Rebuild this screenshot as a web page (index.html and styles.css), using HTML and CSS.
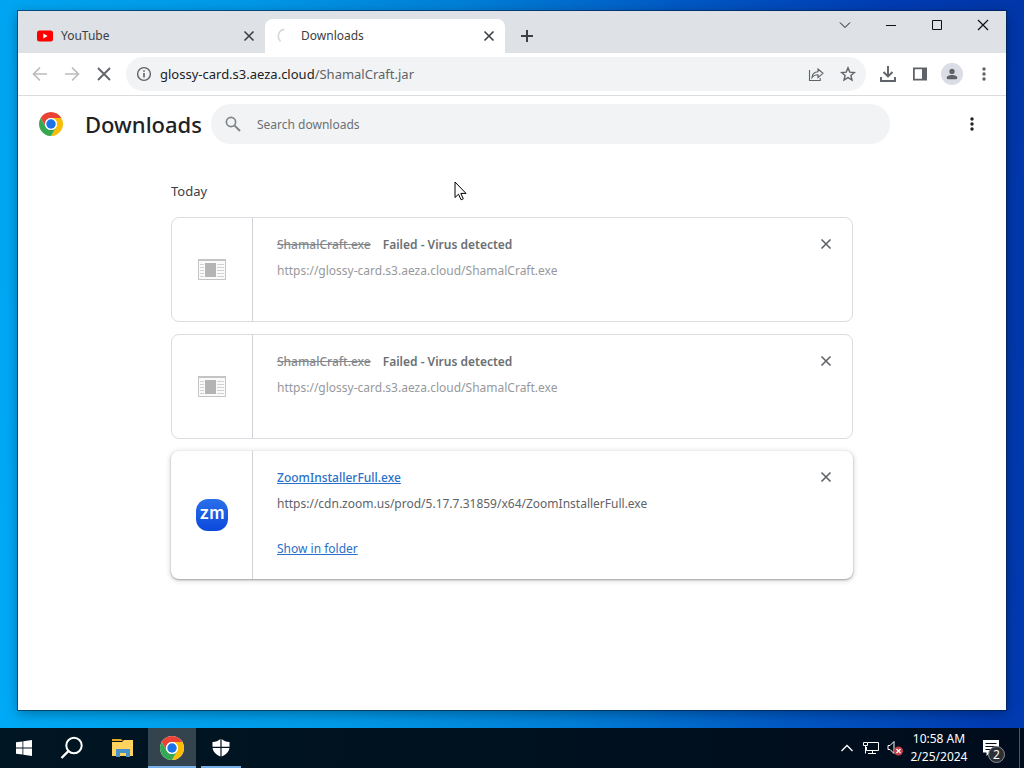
FILE: index.html
```html
<!DOCTYPE html>
<html lang="en">
<head>
    <meta charset="UTF-8">
    <meta name="viewport" content="width=device-width, initial-scale=1.0">
    <title>Downloads</title>
    <link rel="stylesheet" href="styles.css">
</head>
<body>
    <svg class="defs" aria-hidden="true">
        <symbol id="chrome" viewBox="0 0 24 24">
            <circle cx="12" cy="12" r="12" fill="#fff"/>
            <path fill="#ea4335" d="M1.61 6A12 12 0 0 1 22.39 6H12A6 6 0 0 0 6.8 15z"/>
            <path fill="#fbbc04" d="M22.39 6A12 12 0 0 1 12 24L17.2 15A6 6 0 0 0 12 6z"/>
            <path fill="#34a853" d="M12 24A12 12 0 0 1 1.61 6L6.8 15A6 6 0 0 0 17.2 15z"/>
            <circle cx="12" cy="12" r="6" fill="#fff"/>
            <circle cx="12" cy="12" r="4.7" fill="#1a73e8"/>
        </symbol>
        <symbol id="close" viewBox="0 0 16 16">
            <path d="M3.5 3.5l9 9M12.5 3.5l-9 9" fill="none" stroke="currentColor" stroke-width="1.6"/>
        </symbol>
        <symbol id="dots" viewBox="0 0 16 16">
            <circle cx="8" cy="3" r="1.7"/><circle cx="8" cy="8" r="1.7"/><circle cx="8" cy="13" r="1.7"/>
        </symbol>
        <symbol id="exe" viewBox="0 0 28 22">
            <path fill="#fafafa" stroke="#c4c4c4" d="M.5.5h27v20H.5z"/>
            <path fill="#c4c4c4" d="M0 0h28v2H0z"/>
            <path stroke="#d2d2d2" d="M2 5.5h4M2 8.500h4M2 11.5h4M2 14.5h4M2 17.5h4M19 5.5h7M19 8.5h7M19 11.5h7M19 14.5h7M19 17.5h7"/>
            <path fill="#b4b4b4" d="M7 4h11v14H7z"/>
        </symbol>
    </svg>

    <main class="desktop">
        <div class="window">
            <div class="tab-strip">
                <div class="tab">
                    <svg class="icon" viewBox="0 0 16 16"><rect y="2.5" width="16" height="11" rx="2.5" fill="#f00"/><path fill="#fff" d="M6.3 5.5v5l4.3-2.5z"/></svg>
                    <span>YouTube</span>
                    <button aria-label="Close tab"><svg class="icon" viewBox="0 0 16 16"><use href="#close"/></svg></button>
                </div>
                <div class="tab active">
                    <svg class="icon" viewBox="0 0 16 16"><path d="M3.5 13.3A7 7 0 0 1 7.5 1.3" fill="none" stroke="#d4d6da" stroke-width="1.6"/></svg>
                    <span>Downloads</span>
                    <button aria-label="Close tab"><svg class="icon" viewBox="0 0 16 16"><use href="#close"/></svg></button>
                </div>
                <button class="new-tab" aria-label="New tab"><svg class="icon" viewBox="0 0 16 16"><path d="M8 2v12M2 8h12" stroke="currentColor" stroke-width="2"/></svg></button>
                <div class="window-controls">
                    <button aria-label="Search tabs"><svg class="icon" viewBox="0 0 16 16"><path d="M3 5.5l5 5 5-5" fill="none" stroke="currentColor"/></svg></button>
                    <button aria-label="Minimize"><svg class="icon" viewBox="0 0 16 16"><path d="M3 8.5h10" stroke="currentColor"/></svg></button>
                    <button aria-label="Maximize"><svg class="icon" viewBox="0 0 16 16"><path d="M3.5 3.5h9v9h-9z" fill="none" stroke="currentColor"/></svg></button>
                    <button aria-label="Close"><svg class="icon" viewBox="0 0 16 16"><path d="M3 3l10 10M13 3L3 13" stroke="currentColor" stroke-width="1.2"/></svg></button>
                </div>
            </div>

            <div class="toolbar">
                <button class="dim" aria-label="Back"><svg class="icon" viewBox="0 0 16 16"><path d="M15 8H2M8 1.5L1.5 8 8 14.5" fill="none" stroke="currentColor" stroke-width="1.7"/></svg></button>
                <button class="dim" aria-label="Forward"><svg class="icon" viewBox="0 0 16 16"><path d="M1 8h13M8 1.5L14.5 8 8 14.5" fill="none" stroke="currentColor" stroke-width="1.7"/></svg></button>
                <button aria-label="Stop"><svg class="icon" viewBox="0 0 16 16"><path d="M2 2l12 12M14 2L2 14" stroke="currentColor" stroke-width="1.8"/></svg></button>
                <div class="address">
                    <svg class="icon" viewBox="0 0 16 16"><circle cx="8" cy="8" r="6.4" fill="none" stroke="currentColor" stroke-width="1.4"/><path d="M8 7v4.5M8 4.2v1.6" stroke="currentColor" stroke-width="1.6"/></svg>
                    <p class="url">glossy-card.s3.aeza.cloud<span>/ShamalCraft.jar</span></p>
                    <button aria-label="Share"><svg class="icon" viewBox="0 0 16 16"><path d="M1.5 4v10.5h10.7V12M4 11.5c.4-4 2.5-5.7 6-5.8V3l5 4.3-5 4.2V8.8c-2.5 0-4.5.7-6 2.7z" fill="none" stroke="currentColor" stroke-width="1.1"/></svg></button>
                    <button aria-label="Bookmark"><svg class="icon" viewBox="0 0 16 16"><path d="M8 1.9l1.8 4.2 4.6.4-3.5 3 1.1 4.5-4-2.4-4 2.4 1.1-4.5-3.5-3 4.6-.4z" fill="none" stroke="currentColor" stroke-width="1.4"/></svg></button>
                </div>
                <button aria-label="Downloads"><svg class="icon" viewBox="0 0 16 16"><path d="M8 0v10M3.5 6L8 10.5 12.5 6M1 11v4h14v-4" fill="none" stroke="currentColor" stroke-width="1.9"/></svg></button>
                <button aria-label="Side panel"><svg class="icon" viewBox="0 0 16 16"><path d="M1 1.5h14v13H1zM2.8 3.3v9.4H10V3.3z" fill="currentColor" fill-rule="evenodd"/></svg></button>
                <button class="profile" aria-label="Profile"><svg class="icon" viewBox="0 0 16 16"><circle cx="8" cy="5" r="3"/><path d="M2 14v-2c0-2 3.5-3 6-3s6 1 6 3v2z"/></svg></button>
                <button aria-label="Menu"><svg class="icon" viewBox="0 0 16 16"><use href="#dots"/></svg></button>
            </div>

            <header class="page-header">
                <svg class="logo" viewBox="0 0 24 24"><use href="#chrome"/></svg>
                <h1>Downloads</h1>
                <label class="search">
                    <svg class="icon" viewBox="0 0 16 16"><circle cx="6" cy="6" r="4.6" fill="none" stroke="currentColor" stroke-width="1.7"/><path d="M9.5 9.5l5.5 5.5" stroke="currentColor" stroke-width="2"/></svg>
                    <input type="search" placeholder="Search downloads" aria-label="Search downloads">
                </label>
                <button class="more" aria-label="More actions"><svg class="icon" viewBox="0 0 16 16"><use href="#dots"/></svg></button>
            </header>

            <section class="downloads">
                <h2>Today</h2>
                <article class="card">
                    <div class="file-icon"><svg class="exe" viewBox="0 0 28 22"><use href="#exe"/></svg></div>
                    <div class="details">
                        <p class="name"><s>ShamalCraft.exe</s><span>Failed - Virus detected</span></p>
                        <p class="source faded">https://glossy-card.s3.aeza.cloud/ShamalCraft.exe</p>
                    </div>
                    <button class="remove" aria-label="Remove from list"><svg class="icon" viewBox="0 0 16 16"><use href="#close"/></svg></button>
                </article>
                <article class="card">
                    <div class="file-icon"><svg class="exe" viewBox="0 0 28 22"><use href="#exe"/></svg></div>
                    <div class="details">
                        <p class="name"><s>ShamalCraft.exe</s><span>Failed - Virus detected</span></p>
                        <p class="source faded">https://glossy-card.s3.aeza.cloud/ShamalCraft.exe</p>
                    </div>
                    <button class="remove" aria-label="Remove from list"><svg class="icon" viewBox="0 0 16 16"><use href="#close"/></svg></button>
                </article>
                <article class="card complete">
                    <div class="file-icon"><span class="zoom-logo">zm</span></div>
                    <div class="details">
                        <p class="name"><a href="#">ZoomInstallerFull.exe</a></p>
                        <p class="source">https://cdn.zoom.us/prod/5.17.7.31859/x64/ZoomInstallerFull.exe</p>
                        <p class="action"><a href="#">Show in folder</a></p>
                    </div>
                    <button class="remove" aria-label="Remove from list"><svg class="icon" viewBox="0 0 16 16"><use href="#close"/></svg></button>
                </article>
            </section>
        </div>
        <svg class="cursor" viewBox="0 0 13 20"><path d="M1 1v15.5l3.5-3.3 2.6 5.6 2.2-1-2.5-5.4H12z" fill="#fff" stroke="#000"/></svg>
    </main>

    <footer class="taskbar">
        <button class="task" aria-label="Start"><svg class="icon" viewBox="0 0 16 16"><path fill="#fff" d="M0 2.3l6.5-.9v6.2H0zM7.3 1.3L16 0v7.6H7.3zM0 8.4h6.5v6.2L0 13.7zM7.3 8.4H16V16l-8.7-1.3z"/></svg></button>
        <button class="task" aria-label="Search"><svg class="task-icon" viewBox="0 0 24 24"><circle cx="14" cy="9.5" r="7.7" fill="none" stroke="#fff" stroke-width="2"/><path d="M8.5 15L1.5 22" stroke="#fff" stroke-width="2.4"/></svg></button>
        <div class="apps">
            <button class="task" aria-label="File Explorer"><svg class="task-icon" viewBox="0 0 24 24"><path fill="#e5a823" d="M1 3h9l2 2H1z"/><path fill="#ffd35e" d="M1 6h10l2-2h9v16H1z"/><path fill="#4793c9" d="M5 13h14v8h-4v-4H9v4H5z"/></svg></button>
            <button class="task current" aria-label="Google Chrome"><svg class="task-icon" viewBox="0 0 24 24"><use href="#chrome"/></svg></button>
            <button class="task running" aria-label="Windows Security"><svg class="shield" viewBox="0 0 18 18"><path fill="#fff" d="M8.4 0v7.8H.5V3C4 3 6 2 8.4 0zM9.6 0v7.8h7.9V3C14 3 12 2 9.6 0zM.6 9h7.8v8.5C4 15.5 1.2 13 .6 9zM17.4 9H9.600v8.500C14 15.500 16.800 13 17.400 9z"/></svg></button>
        </div>
        <div class="tray">
            <button aria-label="Show hidden icons"><svg class="icon" viewBox="0 0 16 16"><path d="M2.500 11L8 5.500l5.500 5.500" fill="none" stroke="#fff" stroke-width="1.300"/></svg></button>
            <button aria-label="Network"><svg class="icon" viewBox="0 0 16 16"><path d="M5 2.500h10.500v8H3.500V7M9.500 10.500v3M5 13.500h8M.5 2.500h4v3h-4zM2.500 5.500v8" fill="none" stroke="#fff"/></svg></button>
            <button aria-label="Volume"><svg class="icon" viewBox="0 0 16 16"><path d="M1 5.500h2l4-4v12l-4-4H1z" fill="none" stroke="#fff"/><circle cx="11.500" cy="11" r="4.500" fill="#c63c46"/><path d="M9.500 9l4 4M13.500 9l-4 4" stroke="#fff" stroke-width="1.300"/></svg></button>
            <time class="clock" datetime="2024-02-25T10:58">10:58 AM<br>2/25/2024</time>
            <button class="notifications" aria-label="Notifications"><svg class="icon" viewBox="0 0 16 16"><path fill="#fff" d="M0 0h16v12.500H7L3.500 16v-3.500H0z"/><path d="M2.500 3.500h11M2.500 6.500h11M2.500 9.500h7" stroke="#000c18"/></svg><span class="badge">2</span></button>
            <button class="show-desktop" aria-label="Show desktop"></button>
        </div>
    </footer>
</body>
</html>
```
FILE: styles.css
```css
* {
    box-sizing: border-box;
}

body {
    display: flex;
    flex-direction: column;
    min-height: 100vh;
    margin: 0;
    font-family: "Noto Sans", "Open Sans", sans-serif;
    font-size: 12px;
    line-height: 20px;
    color: #3c4043;
}

h1, h2, p {
    margin: 0;
    font-weight: 400;
}

svg {
    display: block;
    fill: currentColor;
    flex: none;
}

button {
    display: flex;
    align-items: center;
    justify-content: center;
    flex: none;
    padding: 0;
    border: 0;
    background: none;
    color: inherit;
    font: inherit;
}

.defs {
    position: absolute;
    width: 0;
    height: 0;
}

.icon {
    width: 16px;
    height: 16px;
}

.desktop {
    position: relative;
    display: flex;
    flex: 1;
    padding: 11px 18px 18px;
    background: linear-gradient(82deg, #00aaf6 0%, #009ae8 30%, #0080d8 50%, #0058c4 70%, #003cb4 88%, #0036a8 100%);
}

.window {
    display: flex;
    flex-direction: column;
    flex: 1;
    background: #fff;
    box-shadow: 0 0 0 1px rgba(0, 30, 70, 0.6), 0 3px 12px rgba(0, 0, 0, 0.35);
}

/* Tabs */
.tab-strip {
    display: flex;
    align-items: flex-end;
    height: 42px;
    padding-left: 7px;
    background: #dee1e6;
}

.tab {
    display: flex;
    align-items: center;
    gap: 8px;
    width: 240px;
    height: 34px;
    padding: 0 8px 0 12px;
}

.tab span {
    flex: 1;
}

.tab.active {
    border-radius: 8px 8px 0 0;
    background: #fff;
}

.new-tab {
    width: 44px;
    height: 34px;
}

.window-controls {
    display: flex;
    align-self: flex-start;
    margin-left: auto;
    color: #111;
}

.window-controls button {
    width: 46px;
    height: 28px;
}

/* Toolbar */
.toolbar {
    display: flex;
    align-items: center;
    height: 43px;
    padding: 0 6px;
    border-bottom: 1px solid #dadce0;
    color: #5f6368;
}

.toolbar > button {
    width: 32px;
    height: 32px;
}

.toolbar .dim {
    color: #babcbe;
}

.address {
    display: flex;
    align-items: center;
    gap: 8px;
    flex: 1;
    height: 34px;
    margin: 0 6px;
    padding: 0 6px 0 10px;
    border-radius: 17px;
    background: #f1f3f4;
}

.address button {
    width: 24px;
    height: 24px;
}

.url {
    flex: 1;
    font-size: 13px;
    color: #202124;
}

.url span {
    color: #5f6368;
}

.profile .icon {
    width: 22px;
    height: 22px;
    padding: 4px;
    border-radius: 50%;
    background: #dadce6;
}

/* Downloads page */
.page-header {
    display: flex;
    align-items: center;
    height: 56px;
    padding: 0 24px 0 21px;
    color: #202124;
}

.logo {
    width: 24px;
    height: 24px;
    margin-right: 22px;
}

h1 {
    width: 126px;
    font-size: 22px;
    font-weight: 500;
    line-height: 28px;
}

.search {
    display: flex;
    align-items: center;
    gap: 16px;
    flex: 1;
    max-width: 679px;
    height: 40px;
    padding: 0 14px;
    border-radius: 20px;
    background: #f1f3f4;
    color: #80868b;
}

.search input {
    flex: 1;
    min-width: 0;
    padding: 2px 0 0;
    border: 0;
    outline: 0;
    background: none;
    font: inherit;
    color: #202124;
}

.search input::placeholder {
    color: #6b7075;
    opacity: 1;
}

.more {
    width: 20px;
    height: 32px;
    margin-left: auto;
}

.downloads {
    width: 682px;
    max-width: 100%;
    margin: 0 auto;
    padding: 29px 0 24px;
}

h2 {
    margin-bottom: 16px;
    font-size: 13px;
}

.card {
    display: flex;
    min-height: 105px;
    margin-bottom: 12px;
    border: 1px solid #dadce0;
    border-radius: 8px;
}

.complete {
    min-height: 128px;
    border-width: 0 1px;
    border-color: transparent;
    box-shadow: 0 1px 2px rgba(60, 64, 67, 0.4), 0 1px 5px 1px rgba(60, 64, 67, 0.18);
}

.file-icon {
    display: flex;
    align-items: center;
    justify-content: center;
    width: 81px;
    border-right: 1px solid #d0d2d5;
}

.exe {
    width: 28px;
    height: 22px;
}

.zoom-logo {
    width: 32px;
    height: 32px;
    border-radius: 12px;
    background: linear-gradient(#2a70ea, #0b48dc);
    font-family: Inter, sans-serif;
    font-size: 17px;
    font-weight: 600;
    line-height: 29px;
    text-align: center;
    color: #fff;
}

.details {
    flex: 1;
    padding: 17px 24px 20px;
}

.name {
    display: flex;
    gap: 12px;
    margin-bottom: 6px;
    font-weight: 600;
    color: #6b6f73;
}

.name s {
    font-weight: 500;
    color: #85898d;
}

.name a {
    font-weight: 500;
}

.source {
    color: #5f6368;
}

.faded {
    color: #97999c;
}

.action {
    margin-top: 25px;
}

a {
    color: #2a6fc9;
}

.remove {
    width: 20px;
    height: 20px;
    margin: 16px 16px 0 0;
    color: #5f6368;
}

.cursor {
    position: absolute;
    left: 454px;
    top: 181px;
    width: 13px;
    height: 20px;
}

/* Taskbar */
.taskbar {
    display: flex;
    height: 40px;
    background: linear-gradient(90deg, #001622, #000c1c);
    color: #fff;
}

.apps {
    display: flex;
    gap: 1px;
    margin-left: 3px;
}

.task {
    width: 48px;
    border-bottom: 2px solid transparent;
    border-top: 2px solid transparent;
}

.current {
    border-color: #34444e #34444e #76b0e8;
    background: #34444e;
}

.running {
    width: 40px;
    margin-left: 4px;
    border-bottom-color: #76b0e8;
}

.task-icon {
    width: 24px;
    height: 24px;
}

.shield {
    width: 18px;
    height: 18px;
}

.tray {
    display: flex;
    align-items: center;
    margin-left: auto;
}

.tray button {
    width: 24px;
    height: 40px;
}

.clock {
    width: 64px;
    line-height: 18px;
    text-align: center;
}

.tray .notifications {
    position: relative;
    width: 40px;
}

.tray .show-desktop {
    width: 5px;
    margin-left: 8px;
    border-left: 1px solid #4a5662;
}

.badge {
    position: absolute;
    right: 6px;
    bottom: 5px;
    width: 17px;
    height: 17px;
    border: 1px solid #8a8f94;
    border-radius: 50%;
    background: #2b3036;
    line-height: 15px;
    text-align: center;
}
```
